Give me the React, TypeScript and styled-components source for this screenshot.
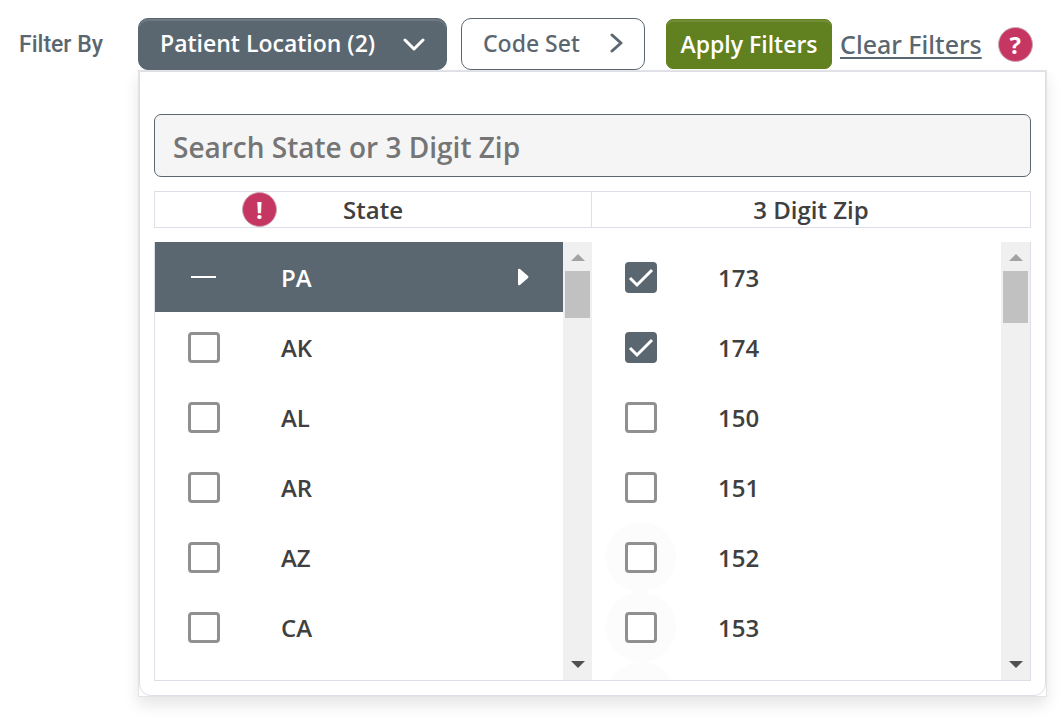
import React, { useEffect, useRef, useState } from 'react';
import styled, { createGlobalStyle } from 'styled-components';

const slate = '#5b6770';
const ruby = '#c63663';
const line = '#dcdfe6';

const GlobalStyle = createGlobalStyle`
  *, *::before, *::after { box-sizing: border-box; }
  body { margin: 0; background: #fff; }
  button, input { font: inherit; margin: 0; }
`;

const Page = styled.main`
  display: flex;
  padding: 18px 14px 28px 19px;
  color: #404040;
  font-family: 'Open Sans', 'Noto Sans', sans-serif;
  font-size: 24px;
  line-height: 34px;
  font-weight: 600;
`;

const FilterBy = styled.div`
  flex: 0 0 119px;
  padding-top: 1px;
  line-height: 52px;
  font-family: Roboto, sans-serif;
  font-size: 23px;
  font-weight: 500;
  color: ${slate};
`;

const Content = styled.div`
  flex: 1;
  min-width: 0;
`;

const Toolbar = styled.div`
  display: flex;
  align-items: center;
  height: 52px;
  white-space: nowrap;
`;

const FilterButton = styled.button<{ $active?: boolean }>`
  display: flex;
  align-items: center;
  justify-content: space-between;
  width: ${(p) => (p.$active ? 309 : 184)}px;
  height: 52px;
  margin-right: 14px;
  padding: 0 21px 2px;
  border: 1px solid ${slate};
  border-radius: 10px;
  background: ${(p) => (p.$active ? slate : '#fff')};
  color: ${(p) => (p.$active ? '#fff' : slate)};
  font-family: ${(p) => (p.$active ? "'Open Sans'" : "'Noto Sans'")}, sans-serif;
  font-weight: ${(p) => (p.$active ? 600 : 500)};
  font-size: 23px;
  box-shadow: ${(p) => (p.$active ? 'inset 0 2px 0 rgba(255, 255, 255, 0.12)' : 'none')};
`;

const ApplyButton = styled.button`
  width: 166px;
  height: 50px;
  margin: 0 8px 0 7px;
  padding: 0;
  border: 1px solid #61801f;
  border-radius: 7px;
  background: #61801f;
  color: #fff;
  font-size: 23px;
  box-shadow: inset 0 2px 0 rgba(255, 255, 255, 0.12);
`;

const ClearLink = styled.a`
  margin-right: 16px;
  color: ${slate};
  font-family: 'Noto Sans', sans-serif;
  font-size: 25px;
  font-weight: 500;
  text-decoration: underline;
  text-decoration-thickness: 2px;
  text-underline-offset: 3px;
`;

const Badge = styled.span`
  flex: none;
  width: 35px;
  height: 35px;
  border: 1px solid #cfa9b6;
  border-radius: 50%;
  background: ${ruby};
  color: #fff;
  font-size: 24px;
  font-weight: 700;
  line-height: 33px;
  text-align: center;
`;

const HelpButton = styled(Badge).attrs({ as: 'button' })`
  padding: 0;
`;

const PanelShadow = styled.div`
  border: 1px solid #e4e4e6;
  box-shadow: 0 8px 14px rgba(0, 0, 0, 0.1);
`;

const Panel = styled.section`
  padding: 42px 14px 14px;
  border: 1px solid ${line};
  border-radius: 0 0 12px 12px;
`;

const Search = styled.input`
  display: block;
  width: 100%;
  height: 63px;
  padding: 2px 18px 0;
  border: 1px solid ${slate};
  border-radius: 7px;
  background: #f5f5f5;
  color: #404040;
  font-size: 28px;
  &::placeholder { color: #757575; opacity: 1; }
`;

const Headings = styled.div`
  display: grid;
  grid-template-columns: 437fr 438fr;
  margin: 14px 0;
  border: 1px solid ${line};
`;

const Heading = styled.div`
  display: grid;
  grid-template-columns: 1fr auto 1fr;
  height: 35px;
  line-height: 36px;
  &:first-child { border-right: 1px solid ${line}; }
`;

const HeadingText = styled.span`
  grid-column: 2;
`;

const HeadingBadge = styled(Badge)`
  justify-self: end;
  margin-right: 66px;
`;

const Lists = styled.div`
  display: grid;
  grid-template-columns: 437fr 438fr;
  height: 439px;
  border: solid ${line};
  border-width: 0 1px 1px;
`;

const ListFrame = styled.div`
  display: flex;
  min-height: 0;
  overflow: hidden;
`;

const Options = styled.div`
  flex: 1;
`;

const Option = styled.label<{ $selected?: boolean }>`
  display: flex;
  align-items: center;
  gap: 42px;
  height: 70px;
  padding: 0 34px 0 14px;
  background: ${(p) => (p.$selected ? slate : 'transparent')};
  color: ${(p) => (p.$selected ? '#fff' : 'inherit')};
`;

const OptionText = styled.span`
  flex: 1;
  padding-top: 1px;
`;

const Halo = styled.span<{ $visible?: boolean }>`
  flex: none;
  display: grid;
  place-items: center;
  width: 70px;
  height: 70px;
  padding-top: 1px;
  border-radius: 50%;
  background: ${(p) => (p.$visible ? '#fcfcfc' : 'transparent')};
`;

const Box = styled.input`
  grid-area: 1 / 1;
  appearance: none;
  width: 32px;
  height: 31px;
  border: 3px solid #909090;
  border-radius: 4px;
  background: #fff;
  &:checked { background: ${slate}; border-color: ${slate}; }
  &:indeterminate { background: transparent; border-color: transparent; }
`;

const Mark = styled.svg`
  grid-area: 1 / 1;
  pointer-events: none;
`;

const Scrollbar = styled.div`
  display: flex;
  flex-direction: column;
  width: 29px;
  background: #f0f0f0;
`;

const ScrollButton = styled.button<{ $down?: boolean }>`
  display: grid;
  place-items: center;
  height: 29px;
  margin-top: ${(p) => (p.$down ? 'auto' : 0)};
  padding: ${(p) => (p.$down ? '0 0 2px' : '2px 0 0')};
  border: 0;
  background: none;
  color: ${(p) => (p.$down ? '#505050' : '#a3a3a3')};
`;

const Thumb = styled.div<{ $size: number }>`
  height: ${(p) => p.$size}px;
  margin: 0 2px;
  background: #c1c1c1;
`;

type CheckProps = { checked?: boolean; mixed?: boolean };

function Check({ checked = false, mixed = false }: CheckProps) {
  const ref = useRef<HTMLInputElement>(null);
  const [on, setOn] = useState(checked);
  const [partial, setPartial] = useState(mixed);

  useEffect(() => {
    if (ref.current) ref.current.indeterminate = partial;
  }, [partial]);

  const toggle = () => {
    setPartial(false);
    setOn(!on);
  };

  return (
    <>
      <Box ref={ref} type="checkbox" checked={on} onChange={toggle} />
      {(on || partial) && (
        <Mark width="32" height="31" fill="none" stroke="#fff" aria-hidden="true">
          {partial ? (
            <path d="M3 15H28" strokeWidth="2" />
          ) : (
            <path d="M5 16L12 23L27 8" strokeWidth="3" />
          )}
        </Mark>
      )}
    </>
  );
}

function Scroll({ size }: { size: number }) {
  return (
    <Scrollbar>
      <ScrollButton aria-label="Scroll up">
        <svg width="14" height="7" fill="currentColor"><path d="M0 7L7 0L14 7Z" /></svg>
      </ScrollButton>
      <Thumb $size={size} />
      <ScrollButton $down aria-label="Scroll down">
        <svg width="14" height="7" fill="currentColor"><path d="M0 0H14L7 7Z" /></svg>
      </ScrollButton>
    </Scrollbar>
  );
}

const states = ['PA', 'AK', 'AL', 'AR', 'AZ', 'CA'];
const zips = [
  { code: '173', checked: true },
  { code: '174', checked: true },
  { code: '150' },
  { code: '151' },
  { code: '152', halo: true },
  { code: '153', halo: true },
];

export default function App() {
  return (
    <>
      <GlobalStyle />
      <Page>
        <FilterBy>Filter By</FilterBy>
        <Content>
          <Toolbar>
            <FilterButton $active aria-expanded="true">
              Patient Location (2)
              <svg width="22" height="15" fill="none" stroke="currentColor" strokeWidth="3" strokeLinecap="round" strokeLinejoin="round">
                <path d="M2 4L11 13L20 4" />
              </svg>
            </FilterButton>
            <FilterButton aria-expanded="false">
              Code Set
              <svg width="13" height="20" fill="none" stroke="currentColor" strokeWidth="3" strokeLinecap="round" strokeLinejoin="round">
                <path d="M2 2L11 10L2 18" />
              </svg>
            </FilterButton>
            <ApplyButton>Apply Filters</ApplyButton>
            <ClearLink href="#clear">Clear Filters</ClearLink>
            <HelpButton>?</HelpButton>
          </Toolbar>
          <PanelShadow>
            <Panel>
              <Search type="text" aria-label="Search State or 3 Digit Zip" placeholder="Search State or 3 Digit Zip" />
              <Headings>
                <Heading>
                  <HeadingBadge>!</HeadingBadge>
                  <HeadingText>State</HeadingText>
                </Heading>
                <Heading>
                  <HeadingText>3 Digit Zip</HeadingText>
                </Heading>
              </Headings>
              <Lists>
                <ListFrame>
                  <Options>
                    {states.map((name, i) => (
                      <Option key={name} $selected={i === 0}>
                        <Halo><Check mixed={i === 0} /></Halo>
                        <OptionText>{name}</OptionText>
                        {i === 0 && (
                          <svg width="12" height="18" fill="currentColor" aria-hidden="true">
                            <path d="M1 2Q1 0 3 1L11 8Q12 9 11 10L3 17Q1 18 1 16Z" />
                          </svg>
                        )}
                      </Option>
                    ))}
                  </Options>
                  <Scroll size={47} />
                </ListFrame>
                <ListFrame>
                  <Options>
                    {zips.map((zip) => (
                      <Option key={zip.code}>
                        <Halo $visible={zip.halo}><Check checked={zip.checked} /></Halo>
                        <OptionText>{zip.code}</OptionText>
                      </Option>
                    ))}
                    <Option as="div"><Halo $visible /></Option>
                  </Options>
                  <Scroll size={52} />
                </ListFrame>
              </Lists>
            </Panel>
          </PanelShadow>
        </Content>
      </Page>
    </>
  );
}
